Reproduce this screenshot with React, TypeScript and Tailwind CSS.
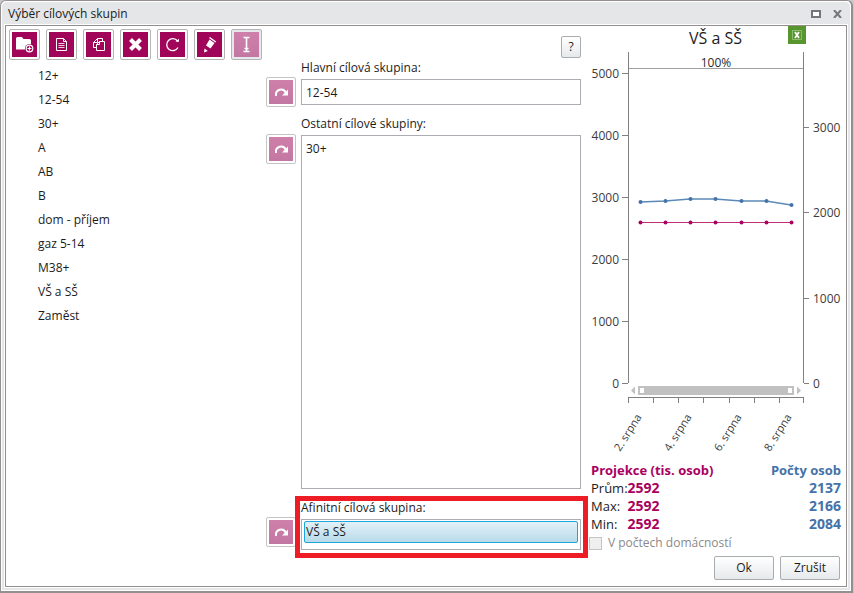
import React, { useState } from 'react';

const groups = ['12+', '12-54', '30+', 'A', 'AB', 'B', 'dom - příjem', 'gaz 5-14', 'M38+', 'VŠ a SŠ', 'Zaměst'];

const leftTicks = [
  { y: 23, label: '5000' },
  { y: 85, label: '4000' },
  { y: 147, label: '3000' },
  { y: 209, label: '2000' },
  { y: 271, label: '1000' },
  { y: 333, label: '0' },
];

const rightTicks = [
  { y: 77, label: '3000' },
  { y: 162, label: '2000' },
  { y: 248, label: '1000' },
  { y: 333, label: '0' },
];

const bottomTicks = [47, 72, 97, 122, 148, 173, 198, 222];

const dates = [
  { x: 61, label: '2. srpna' },
  { x: 111, label: '4. srpna' },
  { x: 161, label: '6. srpna' },
  { x: 211, label: '8. srpna' },
];

const personPoints = [
  [59, 152],
  [84, 151],
  [109, 149],
  [134, 149],
  [160, 151],
  [185, 151],
  [210, 155],
];

const projectionPoints = personPoints.map(([x]) => [x, 172]);

const stats = [
  { label: 'Prům:', projection: '2592', persons: '2137' },
  { label: 'Max:', projection: '2592', persons: '2166' },
  { label: 'Min:', projection: '2592', persons: '2084' },
];

function ToolButton({ label, disabled, children }: { label: string; disabled?: boolean; children: React.ReactNode }) {
  return (
    <button
      type="button"
      aria-label={label}
      disabled={disabled}
      className={
        'size-[31px] shrink-0 rounded-[2px] border border-[#b4b4b4] p-0.5 ' +
        (disabled ? 'bg-[#e6e9eb]' : 'bg-white')
      }
    >
      <svg
        viewBox="0 0 25 25"
        className={'size-full ' + (disabled ? 'bg-linear-to-b from-[#cf80aa] to-[#c277a2]' : 'bg-[#a0055a]')}
        fill="none"
        stroke="white"
      >
        {children}
      </svg>
    </button>
  );
}

function AssignButton({ label }: { label: string }) {
  return (
    <button type="button" aria-label={label} className="size-[30px] rounded-[2px] border border-[#c4c4c4] bg-white p-0.5">
      <svg viewBox="0 0 24 24" className="size-full bg-linear-to-b from-[#cf80aa] to-[#c277a2]" fill="none">
        <path d="M7 16C6 9 14.500 7.500 17 13" stroke="white" strokeWidth="2" />
        <path d="M19 9.500V15.500H13Z" fill="white" />
      </svg>
    </button>
  );
}

function Toolbar() {
  return (
    <div className="flex gap-1.5">
      <ToolButton label="Nová složka">
        <path d="M4 6.5Q4 5 5.5 5H9.500Q10.500 5 11 6.500L11.500 7H17.500Q19 7 19 8.500V17.500H4Z" fill="white" stroke="none" />
        <circle cx="17.500" cy="16.500" r="4.500" fill="#a0055a" stroke="none" />
        <circle cx="17.500" cy="16.500" r="3.300" strokeWidth="1.200" />
        <path d="M15.500 16.500H19.500M17.500 14.500V18.500" strokeWidth="1.200" />
      </ToolButton>
      <ToolButton label="Nová skupina">
        <path d="M7.500 6.500H14.500L17.500 9.500V18.500H7.500Z" />
        <path d="M14.500 6.500V9.500H17.500" />
        <path d="M9.500 11.500H15.500M9.500 13.500H15.500M9.500 15.500H15.500" strokeOpacity="0.8" />
      </ToolButton>
      <ToolButton label="Kopírovat">
        <path d="M7.500 10.500L11.500 6.500H16.500V15.500H7.500ZM7.500 10.500H11.500V6.500" />
        <path d="M10.500 12.500L13.500 9.500H18.500V18.500H10.500Z" fill="#a0055a" />
        <path d="M10.500 12.500H13.500V9.500" />
      </ToolButton>
      <ToolButton label="Odstranit">
        <path d="M7.500 7.500L17.500 17.500M17.500 7.500L7.500 17.500" strokeWidth="4" />
      </ToolButton>
      <ToolButton label="Obnovit">
        <path d="M17.500 9A6 6 0 1 0 18 15.500" strokeWidth="1.300" />
        <path d="M15.500 9.500L18.800 10L19 6.800Z" fill="white" stroke="none" />
      </ToolButton>
      <ToolButton label="Upravit">
        <path d="M12.500 7.500L17.500 11L13.500 16.500L9 13.500Z" fill="white" stroke="none" />
        <path d="M12.500 5.500L18.800 10" strokeWidth="1.500" />
        <path d="M7.500 16.500L10.800 19L7 20.500Z" fill="white" stroke="none" />
      </ToolButton>
      <ToolButton label="Přejmenovat" disabled>
        <path d="M9.500 5.500H15.500M9.500 19.500H15.500M10.500 16.500H14.500" strokeWidth="1.300" />
        <path d="M12.500 5.500V19.500" strokeWidth="1.600" />
      </ToolButton>
    </div>
  );
}

function Chart() {
  return (
    <svg width="265" height="405" role="img" aria-label="Vývoj VŠ a SŠ" className="overflow-visible text-xs" fill="none">
      <path d="M47.500 2V333M222.500 2V333" stroke="#808080" />
      <path d="M48 18.500H222" stroke="#a0a0a0" />
      <text x="135" y="17" textAnchor="middle" className="fill-[#2c2c2c]">100%</text>
      {leftTicks.map((t) => (
        <g key={t.label}>
          <path d={`M41 ${t.y + 0.5}H47`} stroke="#808080" />
          <text x="38" y={t.y + 5} textAnchor="end" className="fill-[#3c3c3c]">{t.label}</text>
        </g>
      ))}
      {rightTicks.map((t) => (
        <g key={t.label}>
          <path d={`M223 ${t.y + 0.5}H228`} stroke="#808080" />
          <text x="232" y={t.y + 5} className="fill-[#3c3c3c]">{t.label}</text>
        </g>
      ))}
      <polyline points={personPoints.map((p) => p.join(',')).join(' ')} stroke="#5b8ab8" strokeWidth="1.300" />
      {personPoints.map(([x, y]) => (
        <circle key={x} cx={x + 0.5} cy={y} r="2" fill="#4572a7" />
      ))}
      <path d="M59 172.500H210" stroke="#c0307a" />
      {projectionPoints.map(([x, y]) => (
        <circle key={x} cx={x + 0.5} cy={y + 0.5} r="2" fill="#aa0060" />
      ))}
      <path d="M57 336H213V345H57Z" fill="#c1c1c1" />
      <path d="M59 338H63V343H59ZM207 338H211V343H207Z" fill="white" />
      <path d="M50 340.500L54 336.500V344.500ZM220 340.500L216 336.500V344.500Z" fill="#c1c1c1" />
      <path d="M47 347.500H223" stroke="#808080" />
      {bottomTicks.map((x) => (
        <path key={x} d={`M${x + 0.5} 348V353`} stroke="#808080" />
      ))}
      {dates.map((d) => (
        <text
          key={d.label}
          x={d.x}
          y="367"
          textAnchor="end"
          transform={`rotate(-58 ${d.x} 367)`}
          className="fill-[#3c3c3c] text-[11px]"
        >
          {d.label}
        </text>
      ))}
    </svg>
  );
}

export default function App() {
  const [mainGroup, setMainGroup] = useState('12-54');
  const action = 'h-6 w-[60px] rounded-[2px] border border-[#a9adb0] bg-linear-to-b from-white to-[#e6e9eb]';

  return (
    <div className="flex min-h-screen flex-col bg-[#c8c8c8] pr-px font-['Open_Sans','Noto_Sans',sans-serif] text-xs text-[#1c1c1c]">
      <div className="flex flex-1 flex-col rounded-t-md border-t border-r-2 border-b-2 border-l border-[#938f8f] bg-white p-px">
        <div className="flex flex-1 flex-col rounded-t-[5px] bg-[#e4e6e7] px-[3px] pb-[3px]">
          <header className="flex h-[23px] items-center justify-between pr-[5px] pl-[3px]">
            <h1>Výběr cílových skupin</h1>
            <div className="flex gap-3">
              <button type="button" aria-label="Maximalizovat">
                <svg width="10" height="8" fill="none">
                  <path d="M1 1H9V7H1Z" fill="white" stroke="#73777c" strokeWidth="2" />
                </svg>
              </button>
              <button type="button" aria-label="Zavřít">
                <svg width="9" height="8" fill="none">
                  <path d="M1 0L8 8M8 0L1 8" stroke="#73777c" strokeWidth="2" />
                </svg>
              </button>
            </div>
          </header>

          <main className="grid flex-1 grid-cols-[260fr_315fr_265px] border border-[#938f8f] bg-white outline outline-white">
            <section className="min-w-0 pt-[3px] pl-[3px]">
              <Toolbar />
              <ul className="mt-1 pl-[29px]">
                {groups.map((g) => (
                  <li key={g} className="h-6 leading-6">{g}</li>
                ))}
              </ul>
            </section>

            <section className="flex min-w-0 flex-col pt-2.5 pb-9">
              <button type="button" className="h-[22px] w-5 self-end rounded-[2px] border border-[#a9adb0] bg-linear-to-b from-white to-[#e6e9eb]">
                ?
              </button>
              <label htmlFor="main" className="mt-0.5 ml-[35px] leading-4">Hlavní cílová skupina:</label>
              <div className="mt-px flex items-center gap-[5px]">
                <AssignButton label="Přiřadit hlavní skupinu" />
                <input
                  id="main"
                  value={mainGroup}
                  onChange={(e) => setMainGroup(e.target.value)}
                  className="h-[26px] min-w-0 flex-1 border border-[#abadb3] px-1"
                />
              </div>
              <h2 id="others" className="mt-[9px] ml-[35px] leading-4">Ostatní cílové skupiny:</h2>
              <div className="mt-0.5 flex flex-1 gap-[5px]">
                <AssignButton label="Přiřadit ostatní skupiny" />
                <ul aria-labelledby="others" className="mt-px flex-1 border border-[#abadb3] px-1 py-px">
                  <li className="leading-6">30+</li>
                </ul>
              </div>
              <div className="relative mt-[11px]">
                <h2 id="affinity" className="ml-[35px] leading-4">Afinitní cílová skupina:</h2>
                <div className="mt-px flex gap-[5px]">
                  <AssignButton label="Přiřadit afinitní skupinu" />
                  <div className="mt-0.5 h-[31px] flex-1 border border-[#abadb3] px-0.5 pt-px">
                    <button
                      type="button"
                      aria-describedby="affinity"
                      className="block h-[22px] w-full rounded-[2px] border border-[#1ba7dd] bg-linear-to-b from-[#e2f1f8] to-[#b9dbe9] px-px text-left"
                    >
                      VŠ a SŠ
                    </button>
                  </div>
                </div>
                <div className="pointer-events-none absolute -top-1 -right-[7px] -bottom-2 left-[29px] border-[5px] border-[#ee1c25]" />
              </div>
            </section>

            <section className="flex flex-col">
              <div className="grid h-6 grid-cols-[1fr_auto_1fr] pl-1">
                <h2 className="col-start-2 text-base">VŠ a SŠ</h2>
                <button type="button" aria-label="Export do Excelu" className="mr-10 size-[18px] justify-self-end bg-[#57962f]">
                  <svg viewBox="0 0 18 18" fill="none">
                    <path d="M4.500 4.500H13.500V13.500H4.500Z" stroke="#8fbb72" />
                    <path d="M7 6L11 12M11 6L7 12" stroke="white" strokeWidth="1.800" />
                  </svg>
                </button>
              </div>
              <Chart />
              <table className="mt-1.5 ml-2.5 w-[250px] text-sm leading-[18px]">
                <thead>
                  <tr className="text-[13px]">
                    <th colSpan={2} className="p-0 text-left font-bold text-[#aa0060]">Projekce (tis. osob)</th>
                    <th className="p-0 text-right font-bold text-[#4572a7]">Počty osob</th>
                  </tr>
                </thead>
                <tbody>
                  {stats.map((s) => (
                    <tr key={s.label}>
                      <th className="w-9 p-0 text-left text-[13px] font-normal">{s.label}</th>
                      <td className="p-0 font-bold text-[#aa0060]">{s.projection}</td>
                      <td className="p-0 text-right font-bold text-[#4572a7]">{s.persons}</td>
                    </tr>
                  ))}
                </tbody>
              </table>
              <label className="mt-0.5 ml-2 flex h-4 items-center gap-1.5 text-[#8a8a8a]">
                <input type="checkbox" disabled className="size-[13px] appearance-none border border-[#c4c4c4] bg-[#efefef]" />
                V počtech domácností
              </label>
              <div className="mt-auto mr-1.5 mb-1.5 flex justify-end gap-1.5">
                <button type="button" className={action}>Ok</button>
                <button type="button" className={action}>Zrušit</button>
              </div>
            </section>
          </main>
        </div>
      </div>
    </div>
  );
}
